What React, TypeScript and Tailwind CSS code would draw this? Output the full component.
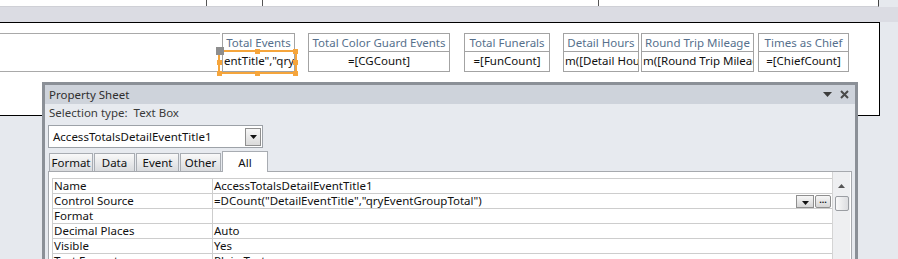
const font = "font-['Noto_Sans',sans-serif]"

interface Col {
  label: string
  value: string
  ml: string
  w: string
  align?: 'left' | 'center'
}

const columns: Col[] = [
  { label: 'Total Events', value: 'entTitle","qry', ml: 'ml-[2px]', w: 'w-[73px]', align: 'left' },
  { label: 'Total Color Guard Events', value: '=[CGCount]', ml: 'ml-[13px]', w: 'w-[142px]' },
  { label: 'Total Funerals', value: '=[FunCount]', ml: 'ml-[14px]', w: 'w-[86px]' },
  { label: 'Detail Hours', value: 'm([Detail Hours])', ml: 'ml-[13px]', w: 'w-[76px]', align: 'left' },
  { label: 'Round Trip Mileage', value: 'm([Round Trip Mileage])', ml: 'ml-[2px]', w: 'w-[113px]', align: 'left' },
  { label: 'Times as Chief', value: '=[ChiefCount]', ml: 'ml-[4px]', w: 'w-[91px]' },
]

const props = [
  { name: 'Name', value: 'AccessTotalsDetailEventTitle1' },
  { name: 'Control Source', value: '=DCount("DetailEventTitle","qryEventGroupTotal")', buttons: true },
  { name: 'Format', value: '' },
  { name: 'Decimal Places', value: 'Auto' },
  { name: 'Visible', value: 'Yes' },
  { name: 'Text Format', value: 'Plain Text' },
]

const tabs = [
  { label: 'Format', w: 'w-[44px]' },
  { label: 'Data', w: 'w-[41px]' },
  { label: 'Event', w: 'w-[43px]' },
  { label: 'Other', w: 'w-[41px]' },
]

function Handle({ pos }: { pos: string }) {
  return <div className={`absolute w-[5px] h-[5px] bg-[#f5a53c] ${pos}`} />
}

function ControlRow() {
  return (
    <div className="flex pt-[10px]">
      <div className="w-[220px] h-[39px] border-y border-[#a9a9a9]" />
      {columns.map((c, i) => (
        <div key={c.label} className={`relative ${c.ml} ${c.w} h-[39px] border border-[#a3a3a3] flex flex-col`}>
          <div className="h-[18px] border-b border-[#a3a3a3] flex items-center justify-center text-[11.5px] leading-none text-[#56708c] whitespace-nowrap overflow-hidden">
            {c.label}
          </div>
          <div
            className={`h-[18px] flex items-center text-[11.5px] leading-none text-[#111] whitespace-nowrap overflow-hidden ${
              c.align === 'left' ? 'justify-start pl-[1px]' : 'justify-center'
            }`}
          >
            {c.value}
          </div>
          {i === 0 && (
            <>
              <div className="absolute left-[-5px] top-[16px] w-[79px] h-[24px] border-2 border-[#f5a53c]" />
              <Handle pos="left-[-6px] top-[26px]" />
              <Handle pos="left-[32px] top-[15px]" />
              <Handle pos="left-[70px] top-[15px]" />
              <Handle pos="left-[70px] top-[26px]" />
              <Handle pos="left-[-6px] top-[37px]" />
              <Handle pos="left-[32px] top-[37px]" />
              <Handle pos="left-[70px] top-[37px]" />
              <div className="absolute left-[-7px] top-[13px] w-[8px] h-[8px] bg-[#8e8e8e]" />
            </>
          )}
        </div>
      ))}
    </div>
  )
}

function SmallDown() {
  return (
    <svg width="7" height="4" viewBox="0 0 7 4">
      <path d="M0 0h7L3.5 4z" fill="#111" />
    </svg>
  )
}

function PropertySheet() {
  return (
    <div className="absolute left-[42px] top-[82px] w-[816px] h-[190px] border-[3px] border-[#8b9097] bg-[#e7eaef] text-[11.5px]">
      <div className="h-[19px] bg-[#ced3db] flex items-center pl-[4px] pr-[6px] text-[#2e2e2e]">
        <span>Property Sheet</span>
        <div className="ml-auto flex items-center gap-[8px]">
          <svg width="9" height="5" viewBox="0 0 9 5">
            <path d="M0 0h9L4.5 5z" fill="#3c3c3c" />
          </svg>
          <svg width="9" height="9" viewBox="0 0 9 9">
            <path d="M1 1l7 7M8 1L1 8" stroke="#4a4a4a" strokeWidth="2" />
          </svg>
        </div>
      </div>
      <div className="h-[18px] pl-[4px] flex items-center text-[#3a3a3a]">
        Selection type:&nbsp; Text Box
      </div>
      <div className="ml-[3px] mt-[3px] w-[215px] h-[23px] bg-white border border-[#9da2a8] flex items-center pl-[4px] pr-[1px] text-[#111]">
        <span>AccessTotalsDetailEventTitle1</span>
        <div className="ml-auto w-[16px] h-[18px] border border-[#8f8f8f] bg-linear-to-b from-[#f7f7f7] to-[#dadada] flex items-center justify-center">
          <SmallDown />
        </div>
      </div>
      <div className="ml-[4px] mt-[3px] h-[20px] flex items-end">
        {tabs.map((t) => (
          <div
            key={t.label}
            className={`${t.w} h-[18px] mr-[1px] border border-b-0 border-[#a8acb2] bg-linear-to-b from-[#f9f9f9] to-[#d9dbde] flex items-center justify-center pt-[1px] text-[#111]`}
          >
            {t.label}
          </div>
        ))}
        <div className="relative z-10 h-[21px] -mb-[1px] w-[46px] border border-b-0 border-[#a8acb2] bg-white flex items-start justify-center pt-[2px] text-[#111]">
          All
        </div>
      </div>
      <div className="ml-[3px] w-[804px] h-[100px] border border-[#a6a9ae] bg-white flex">
        <div className="ml-[3px] mt-[6px] w-[780px] flex flex-col">
          {props.map((p) => (
            <div key={p.name} className="h-[15px] flex border-t border-l border-[#cdcdcd] leading-none text-[#111]">
              <div className="w-[160px] border-r border-[#cdcdcd] pl-[1px] flex items-center">{p.name}</div>
              <div className="flex-1 pl-[1px] flex items-center whitespace-nowrap">
                <span>{p.value}</span>
                {p.buttons && (
                  <div className="ml-auto flex gap-[1px] pr-[1px]">
                    <div className="w-[18px] h-[13px] border border-[#8f8f8f] bg-linear-to-b from-[#f7f7f7] to-[#d6d6d6] flex items-end justify-center pb-[2px]">
                      <SmallDown />
                    </div>
                    <div className="w-[16px] h-[13px] border border-[#8f8f8f] rounded-[2px] bg-linear-to-b from-[#f7f7f7] to-[#d6d6d6] flex items-center justify-center text-[9px] font-bold leading-none">
                      ···
                    </div>
                  </div>
                )}
              </div>
            </div>
          ))}
        </div>
        <div className="w-[18px] border-l border-[#d4d4d4] bg-[#eeeff1] flex flex-col items-center">
          <svg className="mt-[12px]" width="7" height="4" viewBox="0 0 7 4">
            <path d="M3.5 0L7 4H0z" fill="#555" />
          </svg>
          <div className="mt-[8px] w-[14px] h-[15px] border border-[#9a9da2] rounded-[2px] bg-linear-to-r from-[#fafafa] to-[#dcdde0]" />
        </div>
      </div>
    </div>
  )
}

export default function App() {
  return (
    <div className={`relative w-[898px] h-[259px] overflow-hidden bg-[#e6e9ee] ${font}`}>
      <div className="flex h-[7px]">
        <div className="w-[879px] bg-white border-b border-[#cfd0d6] border-r border-r-[#444] flex">
          <div className="w-[207px] border-r border-[#555]" />
          <div className="w-[56px] border-r border-[#555]" />
          <div className="w-[336px] border-r border-[#555]" />
        </div>
      </div>
      <div className="h-[15px] bg-[#dbdce3]" />
      <div className="w-[880px] h-[94px] bg-white border border-l-0 border-black">
        <ControlRow />
      </div>
      <PropertySheet />
    </div>
  )
}
